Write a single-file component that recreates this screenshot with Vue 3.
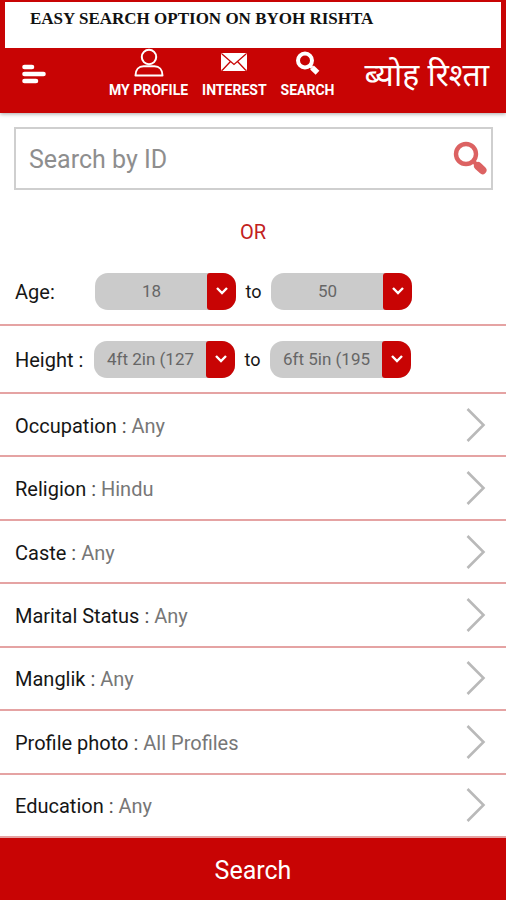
<script setup>
import { reactive, ref } from 'vue'

const searchId = ref('')

const ranges = reactive([
  {
    id: 'age',
    label: 'Age:',
    from: '18',
    to: '50',
    fromOptions: ['18', '21', '25', '30'],
    toOptions: ['30', '40', '50'],
  },
  {
    id: 'height',
    label: 'Height :',
    from: '4ft 2in (127',
    to: '6ft 5in (195',
    fromOptions: ['4ft 2in (127', '4ft 6in (137', '5ft 0in (152'],
    toOptions: ['5ft 6in (167', '6ft 0in (182', '6ft 5in (195'],
  },
])

const filters = [
  { label: 'Occupation', value: 'Any' },
  { label: 'Religion', value: 'Hindu' },
  { label: 'Caste', value: 'Any' },
  { label: 'Marital Status', value: 'Any' },
  { label: 'Manglik', value: 'Any' },
  { label: 'Profile photo', value: 'All Profiles' },
  { label: 'Education', value: 'Any' },
]
</script>

<template>
  <div class="page">
    <header class="header">
      <h1 class="banner">EASY SEARCH OPTION ON BYOH RISHTA</h1>
      <div class="toolbar">
        <button class="menu" type="button" aria-label="Menu">
          <svg width="26" height="20" viewBox="0 0 26 20" fill="none" stroke="#fff" stroke-width="4.6" stroke-linecap="round">
            <path d="M3.500 3h7.500M3.500 10h19M3.500 17h11.500" />
          </svg>
        </button>
        <nav class="nav">
          <a class="nav-item" href="#profile">
            <svg width="30" height="30" viewBox="0 0 30 30" fill="none" stroke="#fff" stroke-width="2">
              <circle cx="15" cy="9" r="7.2" />
              <path d="M1.500 27.500c0-6 3.500-9.300 8-9.300h11c4.500 0 8 3.300 8 9.300z" stroke-linejoin="round" />
            </svg>
            <span>MY PROFILE</span>
          </a>
          <a class="nav-item" href="#interest">
            <svg width="30" height="30" viewBox="0 0 30 30">
              <rect x="2" y="5" width="26" height="18" rx="2" fill="#fff" />
              <path d="M3 6l12 10.500L27 6M3 22.500l8.500-9M27 22.500l-8.500-9" fill="none" stroke="#c80404" stroke-width="1.300" />
            </svg>
            <span>INTEREST</span>
          </a>
          <a class="nav-item" href="#search">
            <svg width="30" height="30" viewBox="0 0 30 30" fill="none" stroke="#fff">
              <circle cx="12" cy="12.500" r="7" stroke-width="4" />
              <path d="M17 17.500l2 2" stroke-width="3.600" />
              <path d="M19 19.500l5.500 5.200" stroke-width="5.400" />
            </svg>
            <span>SEARCH</span>
          </a>
        </nav>
        <a class="logo" href="#home" lang="hi">ब्योह रिश्ता</a>
      </div>
    </header>

    <form class="form" @submit.prevent>
      <div class="search-box">
        <input v-model="searchId" type="text" placeholder="Search by ID" aria-label="Search by ID" />
        <button type="button" aria-label="Search by ID">
          <svg width="36" height="36" viewBox="0 0 36 36" fill="none" stroke="#dc6262">
            <circle cx="13" cy="13" r="10" stroke-width="4.400" />
            <path d="M20 20l3 3" stroke-width="4" />
            <path d="M25 25l4.500 4.200" stroke-width="8" stroke-linecap="round" />
          </svg>
        </button>
      </div>

      <p class="or">OR</p>

      <div v-for="range in ranges" :key="range.id" class="range" :class="range.id">
        <label class="range-label" :for="range.id + '-from'">{{ range.label }}</label>
        <div class="picker">
          <select :id="range.id + '-from'" v-model="range.from">
            <option v-for="option in range.fromOptions" :key="option">{{ option }}</option>
          </select>
          <span class="arrow">
            <svg width="14" height="10" viewBox="0 0 14 10" fill="none" stroke="#fff" stroke-width="2.400">
              <path d="M2 2l5 5 5-5" />
            </svg>
          </span>
        </div>
        <label class="to" :for="range.id + '-to'">to</label>
        <div class="picker">
          <select :id="range.id + '-to'" v-model="range.to">
            <option v-for="option in range.toOptions" :key="option">{{ option }}</option>
          </select>
          <span class="arrow">
            <svg width="14" height="10" viewBox="0 0 14 10" fill="none" stroke="#fff" stroke-width="2.400">
              <path d="M2 2l5 5 5-5" />
            </svg>
          </span>
        </div>
      </div>

      <div class="filters">
        <button v-for="filter in filters" :key="filter.label" class="filter" type="button">
          <span class="filter-text">{{ filter.label }} <span class="value"><span class="colon">:</span> {{ filter.value }}</span></span>
          <svg width="20" height="36" viewBox="0 0 20 36" fill="none" stroke="#b9b9b9" stroke-width="2.600">
            <path d="M1.500 2l16 16-16 16" />
          </svg>
        </button>
      </div>

      <button class="submit" type="submit">Search</button>
    </form>
  </div>
</template>

<style>
body {
  margin: 0;
  background: #fff;
}
</style>

<style scoped>
.page {
  display: flex;
  flex-direction: column;
  min-height: 100vh;
  font-family: Roboto, "Liberation Sans", sans-serif;
  font-size: 20px;
  color: #161616;
}

.page *,
.page {
  box-sizing: border-box;
}

button {
  padding: 0;
  border: 0;
  background: none;
  font: inherit;
  color: inherit;
  cursor: pointer;
}

a {
  color: inherit;
  text-decoration: none;
}

svg {
  display: block;
  flex: none;
}

.header {
  padding: 2px 5px 0;
  background: #c80404;
  box-shadow: 0 1px 4px rgba(0, 0, 0, 0.35);
}

.banner {
  margin: 0;
  padding: 7px 25px 19px;
  background: #fff;
  color: #111;
  font-family: "Liberation Serif", serif;
  font-size: 17px;
  line-height: 20px;
}

.toolbar {
  display: flex;
  align-items: flex-start;
  height: 65px;
  padding: 0 12px 0 16px;
  color: #fff;
}

.menu {
  margin-top: 16px;
}

.nav {
  display: flex;
  gap: 14px;
  margin: 0 auto 0 62px;
}

.nav-item {
  display: flex;
  flex-direction: column;
  align-items: center;
  gap: 4px;
  font-size: 14px;
  font-weight: 700;
  line-height: 16px;
}

.logo {
  margin-top: 12px;
  font-family: "Noto Sans Devanagari", "Noto Sans", sans-serif;
  font-size: 32px;
  line-height: 36px;
  white-space: nowrap;
}

.form {
  display: flex;
  flex: 1;
  flex-direction: column;
}

.search-box {
  display: flex;
  align-items: center;
  height: 63px;
  margin: 14px 13px 0 14px;
  padding: 0 2px 0 13px;
  border: 2px solid #cfcfcf;
}

.search-box input {
  flex: 1;
  min-width: 0;
  padding: 2px 0 0;
  border: 0;
  outline: 0;
  background: none;
  font: inherit;
  font-size: 25px;
  color: #333;
}

.search-box input::placeholder {
  color: #8e8e8e;
  opacity: 1;
}

.or {
  margin: 30px 0 14px;
  color: #c22020;
  line-height: 24px;
  text-align: center;
}

.range {
  display: grid;
  grid-template-columns: 80px 141px 35px 141px;
  align-items: center;
  height: 68px;
  padding-left: 15px;
  border-bottom: 2px solid #e5a3a3;
}

.height {
  grid-template-columns: 79px 141px 35px 141px;
}

.range-label,
.filter-text {
  padding-top: 2px;
}

.to {
  font-size: 18px;
  text-align: center;
}

.picker {
  display: grid;
  grid-template-columns: 1fr 29px;
  height: 37px;
  overflow: hidden;
  border-radius: 13px;
  background: #cbcbcb;
}

.picker select {
  grid-area: 1 / 1 / 2 / 3;
  width: 100%;
  padding: 0 28px 0 0;
  border: 0;
  appearance: none;
  background: none;
  font: inherit;
  font-size: 17px;
  color: #666;
  text-align: center;
  text-align-last: center;
}

.arrow {
  display: grid;
  grid-area: 1 / 2;
  place-items: center;
  border-radius: 3px 0 0 3px;
  background: #c80404;
  pointer-events: none;
}

.filters {
  display: grid;
  flex: 1;
  grid-auto-rows: 1fr;
}

.filter {
  display: flex;
  align-items: center;
  justify-content: space-between;
  min-height: 56px;
  padding: 0 20px 0 15px;
  border-bottom: 2px solid #e5a3a3;
  text-align: left;
}

.value {
  color: #777;
}

.colon {
  color: #555;
}

.submit {
  height: 62px;
  padding-top: 2px;
  background: #c80404;
  color: #fff;
  font-size: 25px;
}
</style>
